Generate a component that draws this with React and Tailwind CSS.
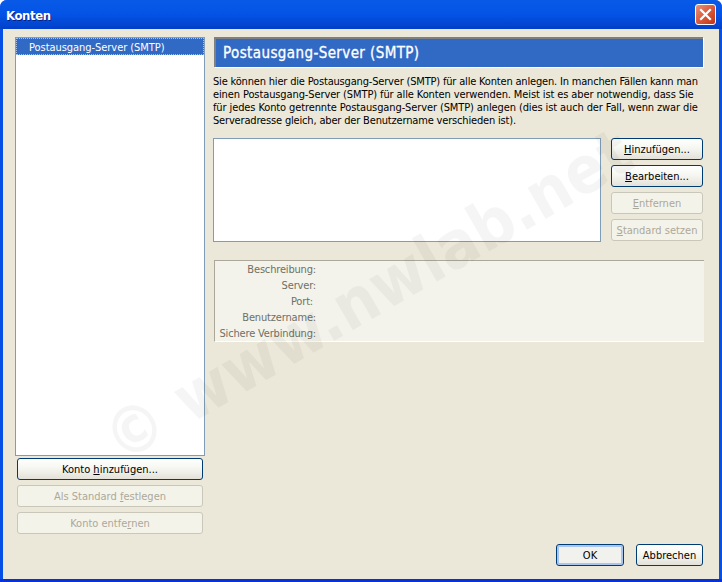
const font = "font-['DejaVu_Sans',sans-serif] text-[11px] [font-stretch:condensed] tracking-[-0.17px]";

const XpButton = ({ label, className = '', disabled = false, focused = false }) => {
    if (disabled) {
        return (
            <div className={`flex items-center justify-center h-[22px] pt-[2px] tracking-normal rounded-[3px] border border-[#c9c7ba] bg-[#f4f3ea] text-[#aca899] ${className}`}>
                {label}
            </div>
        );
    }
    return (
        <div className={`flex items-center justify-center h-[22px] pt-[2px] tracking-normal rounded-[3px] border border-[#003c74] text-black ${focused ? 'bg-[#f1f1ed] shadow-[inset_0_0_0_2px_#a9c4ee]' : 'bg-gradient-to-b from-white via-[#f5f5f0] to-[#e3e1d8]'} ${className}`}>
            {label}
        </div>
    );
};

const detailRows = ['Beschreibung:', 'Server:', 'Port:\u00a0', 'Benutzername:', 'Sichere Verbindung:'];

const App = () => {
    return (
        <div className={`relative w-[722px] h-[582px] overflow-hidden flex flex-col rounded-t-[7px] bg-[#0650e6] ${font}`}>
            {/* title bar */}
            <div className="h-[29px] shrink-0 flex items-center justify-between px-[6px] bg-gradient-to-b from-[#0a5ae8] via-[#0453e6] to-[#0240c8]">
                <span className="pt-[3px] text-[13px] font-bold tracking-[-0.4px] text-white [text-shadow:1px_1px_0_#0a1f80]">Konten</span>
                <div className="w-[21px] h-[21px] flex items-center justify-center rounded-[3px] border border-white bg-gradient-to-br from-[#e9907a] via-[#da5a3c] to-[#c0330f]">
                    <svg width="13" height="13" viewBox="0 0 13 13">
                        <path d="M2 2 L11 11 M11 2 L2 11" stroke="#fff" strokeWidth="2.2" strokeLinecap="square" fill="none" />
                    </svg>
                </div>
            </div>

            {/* dialog body */}
            <div className="flex-1 mx-[3px] bg-[#ebe8d9] flex pt-[8px] pl-[12px] pr-[16px] text-black">
                <div className="w-[190px] shrink-0 flex flex-col">
                    <div className="h-[419px] bg-white border border-[#7f9db9]">
                        <div className="h-[17px] bg-[#316ac5] text-white pl-[12px] pt-[1px] leading-[15px] tracking-[-0.05px] border border-dotted border-[#a9c0e6]">
                            Postausgang-Server (SMTP)
                        </div>
                    </div>
                    <div className="flex flex-col gap-[5px] mt-[2px] px-[2px]">
                        <XpButton label={<span>Konto <u>h</u>inzufügen...</span>} />
                        <XpButton disabled label={<span>Als Standard <u>f</u>estlegen</span>} />
                        <XpButton disabled label={<span>Konto entfe<u>r</u>nen</span>} />
                    </div>
                </div>

                <div className="w-[490px] min-w-0 ml-[8px] flex flex-col">
                    <div className="ml-[1px] h-[30px] bg-[#316ac5] border-t-2 border-l-2 border-[#808080] shadow-[1px_1px_0_#fff] flex items-center pl-[7px] text-[15px] font-medium tracking-[0.4px] [-webkit-text-stroke:0.3px_white] text-white">
                        Postausgang-Server (SMTP)
                    </div>
                    <p className="mt-[7px] pt-[1px] -mb-[1px] leading-[13px] whitespace-nowrap">
                        <span className="tracking-[-0.18px]">Sie können hier die Postausgang-Server (SMTP) für alle Konten anlegen. In manchen Fällen kann man</span><br />
                        <span className="tracking-[-0.11px]">einen Postausgang-Server (SMTP) für alle Konten verwenden. Meist ist es aber notwendig, dass Sie</span><br />
                        <span className="tracking-[-0.11px]">für jedes Konto getrennte Postausgang-Server (SMTP) anlegen (dies ist auch der Fall, wenn zwar die</span><br />
                        Serveradresse gleich, aber der Benutzername verschieden ist).
                    </p>
                    <div className="flex mt-[12px]">
                        <div className="w-[388px] h-[104px] bg-white border border-[#7f9db9]"></div>
                        <div className="ml-[10px] w-[92px] flex flex-col gap-[5px]">
                            <XpButton label={<span><u>H</u>inzufügen...</span>} />
                            <XpButton label={<span><u>B</u>earbeiten...</span>} />
                            <XpButton disabled label={<span><u>E</u>ntfernen</span>} />
                            <XpButton disabled label={<span><u>S</u>tandard setzen</span>} />
                        </div>
                    </div>
                    <div className="mt-[18px] ml-[1px] h-[82px] w-[490px] bg-[#f3f3eb] border-t border-l border-[#aca899] border-b border-b-white pt-[1px] text-[#716f64]">
                        {detailRows.map((row) => (
                            <div key={row} className="h-[16px] w-[101px] text-right leading-[16px]">{row}</div>
                        ))}
                    </div>
                    <div className="mt-auto mb-[13px] flex justify-end gap-[12px]">
                        <XpButton focused label="OK" className="w-[68px]" />
                        <XpButton label="Abbrechen" className="w-[67px]" />
                    </div>
                </div>
            </div>
            <div className="h-[3px] shrink-0 bg-[#0831d9]"></div>

            {/* watermark */}
            <div className="absolute left-[103px] top-[263px] w-[530px] flex justify-center pointer-events-none -rotate-[30deg] text-[66px] leading-none font-bold tracking-normal font-['DejaVu_Sans',sans-serif] text-black/[0.04] whitespace-nowrap">
                © www.nwlab.net
            </div>
        </div>
    );
};

export default App;
